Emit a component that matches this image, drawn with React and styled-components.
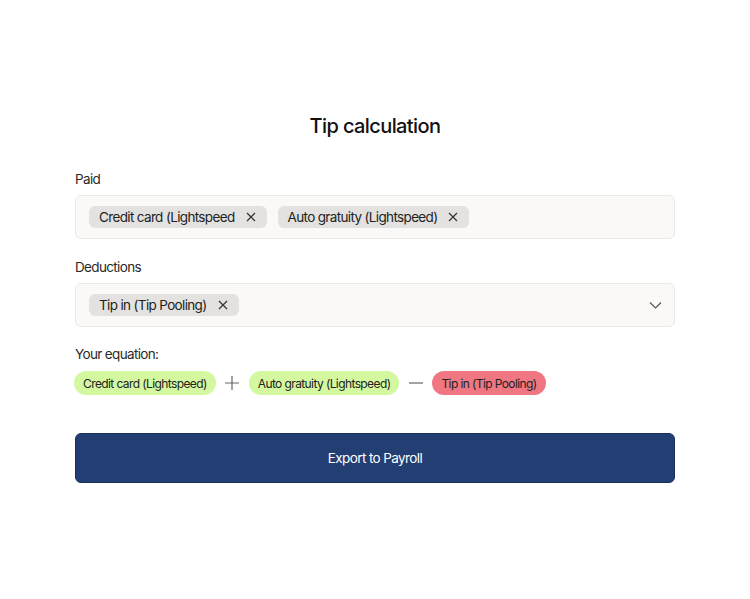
import React from "react";
import styled, { createGlobalStyle } from "styled-components";

const Global = createGlobalStyle`
  html, body { margin: 0; padding: 0; background: #ffffff; }
  body { font-family: Inter, "Noto Sans", sans-serif; color: #1a1a1a; }
`;

const Page = styled.div`
  width: 600px;
  margin: 0 auto;
  padding-top: 112px;
  display: flex;
  flex-direction: column;
`;

const Title = styled.h1`
  margin: 0 0 29px;
  font-size: 20px;
  font-weight: 500;
  letter-spacing: -0.6px;
  text-align: center;
  line-height: 28px;
  color: #111;
`;

const Label = styled.div`
  font-size: 13.5px;
  letter-spacing: -0.65px;
  line-height: 20px;
  color: #2a2a2a;
  margin-bottom: 6px;
`;

const Field = styled.div`
  box-sizing: border-box;
  height: 44px;
  border: 1px solid #ebe9e6;
  background: #faf9f7;
  border-radius: 6px;
  display: flex;
  align-items: center;
  padding: 0 12px 0 13px;
  gap: 11px;
  margin-bottom: ${(p) => p.$mb || 0}px;
`;

const Chip = styled.span`
  display: inline-flex;
  align-items: center;
  height: 22px;
  padding: 0 11px 0 10px;
  gap: 11px;
  border-radius: 6px;
  background: #e3e2e0;
  font-size: 13.5px;
  letter-spacing: -0.65px;
  color: #222;
`;

const Spacer = styled.div`
  flex: 1;
`;

const Equation = styled.div`
  display: flex;
  align-items: center;
  margin-top: 1px;
  margin-left: -1px;
`;

const Pill = styled.span`
  display: inline-flex;
  align-items: center;
  height: 24px;
  padding: 0 9px;
  border-radius: 12px;
  font-size: 12px;
  letter-spacing: -0.6px;
  color: #222;
  background: ${(p) => (p.$neg ? "#f07682" : "#d4f8a0")};
`;

const Op = styled.span`
  width: 33px;
  display: inline-flex;
  justify-content: center;
  align-items: center;
  color: #666;
`;

const Button = styled.button`
  margin-top: 38px;
  height: 50px;
  width: 100%;
  border: 1px solid #1a2f5c;
  border-radius: 6px;
  background: #233e73;
  color: #fff;
  font-family: inherit;
  font-size: 13.5px;
  letter-spacing: -0.6px;
`;

const XIcon = () => (
  <svg width="10" height="10" viewBox="0 0 10 10" fill="none" stroke="#333" strokeWidth="1.2">
    <path d="M1 1L9 9M9 1L1 9" />
  </svg>
);

const Chevron = () => (
  <svg width="13" height="8" viewBox="0 0 13 8" fill="none" stroke="#555" strokeWidth="1.2">
    <path d="M1 1.5L6.5 7L12 1.5" />
  </svg>
);

const Plus = () => (
  <svg width="14" height="14" viewBox="0 0 14 14" fill="none" stroke="#666" strokeWidth="1.2">
    <path d="M7 0V14M0 7H14" />
  </svg>
);

const Minus = () => (
  <svg width="14" height="14" viewBox="0 0 14 14" fill="none" stroke="#666" strokeWidth="1.2">
    <path d="M0 7H14" />
  </svg>
);

export default function App() {
  return (
    <>
      <Global />
      <Page>
        <Title>Tip calculation</Title>
        <Label>Paid</Label>
        <Field $mb={18}>
          <Chip>
            Credit card (Lightspeed <XIcon />
          </Chip>
          <Chip>
            Auto gratuity (Lightspeed) <XIcon />
          </Chip>
        </Field>
        <Label>Deductions</Label>
        <Field $mb={17}>
          <Chip>
            Tip in (Tip Pooling) <XIcon />
          </Chip>
          <Spacer />
          <Chevron />
        </Field>
        <Label>Your equation:</Label>
        <Equation>
          <Pill>Credit card (Lightspeed)</Pill>
          <Op>
            <Plus />
          </Op>
          <Pill>Auto gratuity (Lightspeed)</Pill>
          <Op>
            <Minus />
          </Op>
          <Pill $neg>Tip in (Tip Pooling)</Pill>
        </Equation>
        <Button>Export to Payroll</Button>
      </Page>
    </>
  );
}
